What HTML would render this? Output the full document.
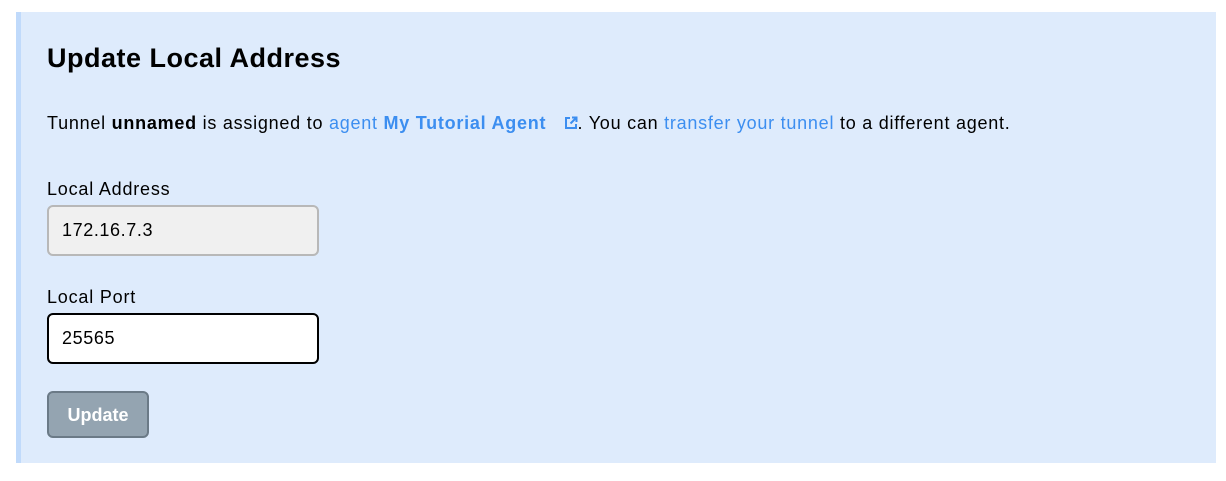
<!DOCTYPE html>
<html><head><style>
body{margin:0;background:#fff;font-family:"Liberation Sans",Arial,sans-serif;color:#000;}
.panel{position:absolute;left:16px;top:12px;width:1200px;height:451px;background:#deebfc;border-left:5px solid #c0dafb;box-sizing:border-box;}
h1{position:absolute;left:26px;top:31px;margin:0;font-size:27px;font-weight:bold;letter-spacing:0.5px;}
.p{position:absolute;left:26px;top:101px;font-size:18px;white-space:nowrap;letter-spacing:0.75px;}
a{color:#3c8ef0;text-decoration:none;}
.lbl{position:absolute;left:26px;font-size:18px;letter-spacing:0.8px;}
.in{position:absolute;left:26px;width:272px;height:51px;box-sizing:border-box;border-radius:6px;font-size:18px;padding:13px 0 0 13px;letter-spacing:0.6px;}
.btn{position:absolute;left:26px;top:379px;width:102px;height:47px;box-sizing:border-box;background:#94a4b1;border:2px solid #6b7a87;border-radius:6px;color:#fff;font-weight:bold;font-size:18px;text-align:center;line-height:45px;}
</style></head><body>
<div class="panel">
<h1>Update Local Address</h1>
<div class="p">Tunnel <b>unnamed</b> is assigned to <a>agent <b>My Tutorial Agent</b></a>&nbsp;&nbsp;&nbsp;<svg width="14" height="14" viewBox="0 0 14 14" style="vertical-align:-1px"><path d="M6 2H2v10h10V8" fill="none" stroke="#3c8ef0" stroke-width="2"/><path d="M8 1.5h4.5V6M12.5 1.5L6.5 7.5" fill="none" stroke="#3c8ef0" stroke-width="2"/></svg>. You can <a>transfer your tunnel</a> to a different agent.</div>
<div class="lbl" style="top:167px">Local Address</div>
<div class="in" style="top:193px;background:#f0f0f0;border:2px solid #b8b8b8">172.16.7.3</div>
<div class="lbl" style="top:275px">Local Port</div>
<div class="in" style="top:301px;background:#fff;border:2px solid #000">25565</div>
<div class="btn">Update</div>
</div>
</body></html>
